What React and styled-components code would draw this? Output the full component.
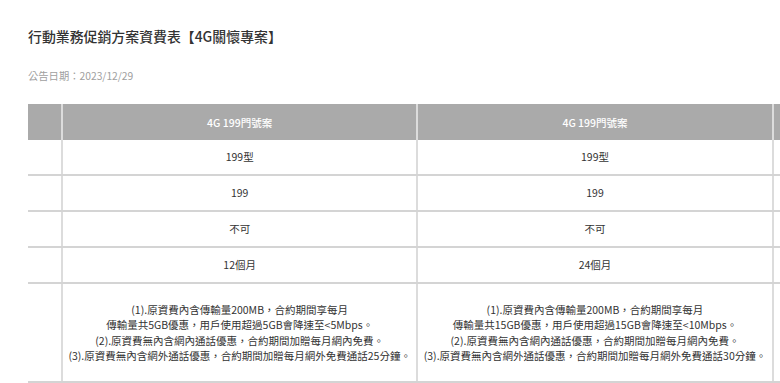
import React from "react";
import styled, { createGlobalStyle } from "styled-components";

const GlobalStyle = createGlobalStyle`
  body {
    margin: 0;
    background: #ffffff;
    overflow: hidden;
    font-family: "Noto Sans CJK TC", "Noto Sans", sans-serif;
  }
`;

const Page = styled.div`
  padding: 26px 0 0 28px;
  width: 1200px;
`;

const Title = styled.h1`
  margin: 0;
  font-size: 13.9px;
  line-height: 20px;
  font-weight: 500;
  color: #333333;
`;

const PostDate = styled.div`
  margin-top: 22px;
  font-size: 10.3px;
  line-height: 16px;
  color: #a0a0a0;
`;

const Table = styled.table`
  margin-top: 20px;
  border-collapse: collapse;
  table-layout: fixed;
  width: 1100px;
`;

const HeadCell = styled.th`
  background: #aaaaaa;
  color: #ffffff;
  font-size: 10.5px;
  font-weight: 500;
  height: 36px;
  padding: 0;
  text-align: center;
  border-left: 2px solid #dcdcdc;
  &:first-child {
    border-left: none;
  }
`;

const Cell = styled.td`
  height: ${(p) => (p.$tall ? "97px" : "34px")};
  padding: 0 4px;
  text-align: center;
  color: #333333;
  font-size: 10.5px;
  line-height: 15.5px;
  border-left: 2px solid #dcdcdc;
  border-bottom: 2px solid #d4d4d4;
  &:first-child {
    border-left: none;
  }
`;

const plans = [
  {
    name: "4G 199門號案",
    type: "199型",
    fee: "199",
    transfer: "不可",
    period: "12個月",
    notes: [
      "(1).原資費內含傳輸量200MB，合約期間享每月",
      "傳輸量共5GB優惠，用戶使用超過5GB會降速至<5Mbps。",
      "(2).原資費無內含網內通話優惠，合約期間加贈每月網內免費。",
      "(3).原資費無內含網外通話優惠，合約期間加贈每月網外免費通話25分鐘。",
    ],
  },
  {
    name: "4G 199門號案",
    type: "199型",
    fee: "199",
    transfer: "不可",
    period: "24個月",
    notes: [
      "(1).原資費內含傳輸量200MB，合約期間享每月",
      "傳輸量共15GB優惠，用戶使用超過15GB會降速至<10Mbps。",
      "(2).原資費無內含網內通話優惠，合約期間加贈每月網內免費。",
      "(3).原資費無內含網外通話優惠，合約期間加贈每月網外免費通話30分鐘。",
    ],
  },
];

const rows = ["type", "fee", "transfer", "period"];

function App() {
  return (
    <Page>
      <GlobalStyle />
      <Title>行動業務促銷方案資費表【4G關懷專案】</Title>
      <PostDate>公告日期：2023/12/29</PostDate>
      <Table>
        <colgroup>
          <col style={{ width: "34px" }} />
          <col style={{ width: "355px" }} />
          <col style={{ width: "355px" }} />
          <col style={{ width: "355px" }} />
        </colgroup>
        <thead>
          <tr>
            <HeadCell />
            {plans.map((p, i) => (
              <HeadCell key={i}>{p.name}</HeadCell>
            ))}
            <HeadCell />
          </tr>
        </thead>
        <tbody>
          {rows.map((key) => (
            <tr key={key}>
              <Cell />
              {plans.map((p, i) => (
                <Cell key={i}>{p[key]}</Cell>
              ))}
              <Cell />
            </tr>
          ))}
          <tr>
            <Cell $tall />
            {plans.map((p, i) => (
              <Cell $tall key={i}>
                {p.notes.map((line, j) => (
                  <div key={j}>{line}</div>
                ))}
              </Cell>
            ))}
            <Cell $tall />
          </tr>
        </tbody>
      </Table>
    </Page>
  );
}

export default App;
